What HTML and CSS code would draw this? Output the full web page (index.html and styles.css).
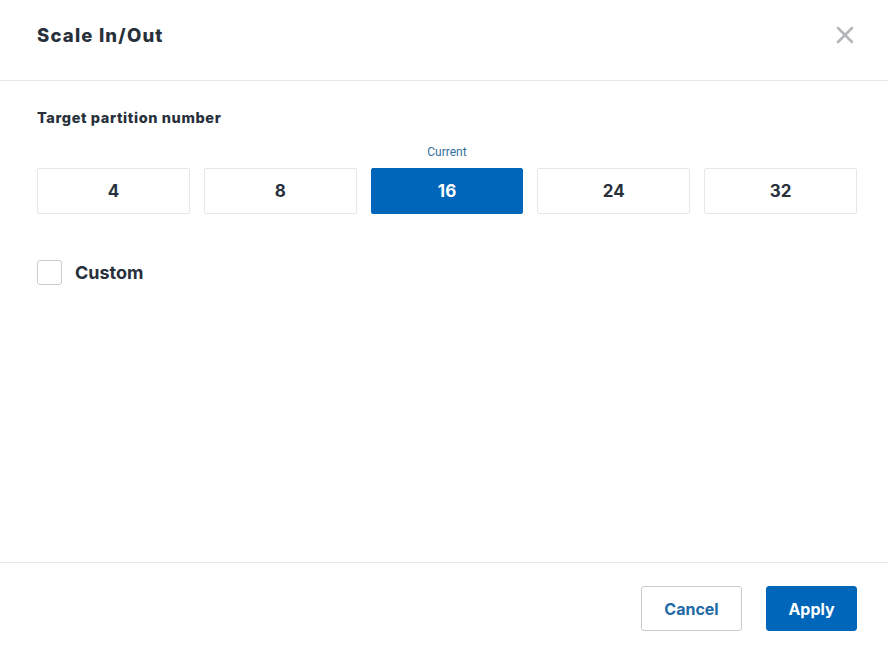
FILE: index.html
```html
<!DOCTYPE html>
<html>
<head>
<meta charset="utf-8">
<link rel="stylesheet" href="styles.css">
</head>
<body>
<div class="dialog">
  <header class="header">
    <h1 class="title">Scale In/Out</h1>
    <button class="close" aria-label="Close">
      <svg width="18" height="18" viewBox="0 0 18 18"><path d="M2 2L16 16M16 2L2 16" stroke="#b3b6ba" stroke-width="2.6" stroke-linecap="round"/></svg>
    </button>
  </header>
  <main class="body">
    <div class="label">Target partition number</div>
    <div class="options">
      <div class="opt"><span class="cap"></span><button class="choice">4</button></div>
      <div class="opt"><span class="cap"></span><button class="choice">8</button></div>
      <div class="opt"><span class="cap">Current</span><button class="choice active">16</button></div>
      <div class="opt"><span class="cap"></span><button class="choice">24</button></div>
      <div class="opt"><span class="cap"></span><button class="choice">32</button></div>
    </div>
    <label class="custom"><span class="box"></span><span>Custom</span></label>
  </main>
  <footer class="footer">
    <button class="btn secondary">Cancel</button>
    <button class="btn primary">Apply</button>
  </footer>
</div>
</body>
</html>
```
FILE: styles.css
```css
* { box-sizing: border-box; }
html, body { margin: 0; padding: 0; background: #fff; }
body { font-family: Inter, "Liberation Sans", sans-serif; color: #27303b; }
.dialog { width: 888px; height: 652px; display: flex; flex-direction: column; }
.header {
  height: 81px; border-bottom: 1px solid #e8e9eb;
  display: flex; align-items: center; justify-content: space-between;
  padding: 0 34px 11px 37px;
}
.title { margin: 0; font-size: 18.5px; font-weight: 800; letter-spacing: 1.2px; }
.close { background: none; border: 0; padding: 0; width: 18px; height: 18px; display: flex; }
.body { flex: 1; padding: 28px 31px 0 37px; }
.label { font-size: 14.5px; font-weight: 800; line-height: 18px; letter-spacing: 0.6px; }
.options { display: flex; gap: 14px; margin-top: 17px; }
.opt { flex: 1; display: flex; flex-direction: column; align-items: stretch; }
.cap { height: 16px; line-height: 16px; text-align: center; font-family: Roboto, sans-serif; font-size: 12px; color: #2f6f9f; margin-bottom: 8px; }
.choice {
  width: 100%; height: 46px; background: #fff; border: 1px solid #e6e7e9; border-radius: 2px;
  font-family: Inter, sans-serif; font-size: 17px; font-weight: 700; color: #27303b;
}
.choice.active { background: #0066b9; border-color: #0066b9; color: #fff; }
.custom { display: flex; align-items: center; gap: 13px; margin-top: 46px; font-size: 18px; font-weight: 700; line-height: 22px; }
.box { width: 25px; height: 25px; border: 1px solid #c9ccd1; border-radius: 3px; background: #fff; }
.footer {
  height: 90px; border-top: 1px solid #e8e9eb;
  display: flex; align-items: flex-start; justify-content: flex-end; gap: 24px;
  padding: 23px 31px 0 0;
}
.btn { height: 45px; border-radius: 3px; font-family: Inter, sans-serif; font-size: 16px; font-weight: 700; }
.secondary { width: 101px; background: #fff; border: 1px solid #c7ccd2; color: #1f6aa6; }
.primary { width: 91px; background: #0066b9; border: 1px solid #0066b9; color: #fff; }
```
